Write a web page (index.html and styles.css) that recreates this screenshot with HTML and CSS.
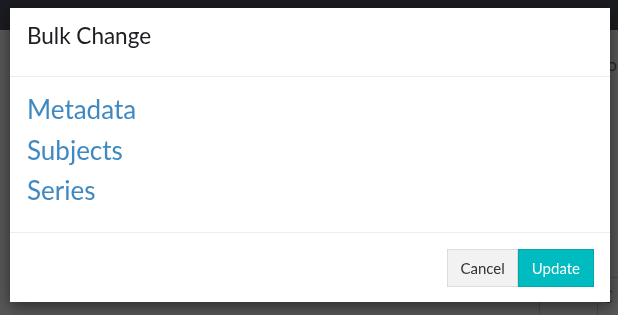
FILE: index.html
```html
<!DOCTYPE html>
<html>
<head>
<meta charset="utf-8">
<link rel="stylesheet" href="styles.css">
</head>
<body>
<div class="page">
  <div class="navbar"></div>
  <div class="content">
    <div class="row-info">Info</div>
    <div class="spacer"></div>
    <div class="bottom-box"><span class="cell"></span><span class="cell last">C</span></div>
  </div>
</div>
<div class="modal">
  <div class="modal-header"><h4 class="modal-title">Bulk Change</h4></div>
  <div class="modal-body">
    <a class="link" href="#">Metadata</a>
    <a class="link" href="#">Subjects</a>
    <a class="link" href="#">Series</a>
  </div>
  <div class="modal-footer">
    <button class="btn btn-default">Cancel</button><button class="btn btn-primary">Update</button>
  </div>
</div>
</body>
</html>
```
FILE: styles.css
```css
html, body {
  margin: 0;
  padding: 0;
  height: 100%;
  overflow: hidden;
}
body {
  background: #585858;
  font-family: Lato, "Liberation Sans", sans-serif;
}
.page {
  display: flex;
  flex-direction: column;
  height: 100%;
}
.navbar {
  height: 30px;
  background: #1b1c21;
  flex: none;
}
.content {
  flex: 1;
  display: flex;
  flex-direction: column;
  color: #1e2a36;
}
.row-info {
  margin-top: 25px;
  text-align: right;
  padding-right: 1px;
  font-size: 17px;
  line-height: 20px;
}
.spacer { flex: 1; }
.bottom-box {
  display: flex;
  justify-content: flex-end;
  height: 38px;
}
.cell {
  width: 57px;
  border-left: 1px solid #4a4a4a;
  border-top: 1px solid #4a4a4a;
}
.cell.last {
  width: 17px;
  padding-left: 3px;
  padding-top: 9px;
  font-size: 17px;
  line-height: 20px;
  overflow: hidden;
}
.modal {
  position: fixed;
  top: 8px;
  left: 10px;
  width: 600px;
  height: 294px;
  background: #fff;
  box-shadow: 0 5px 15px rgba(0,0,0,0.5);
  display: flex;
  flex-direction: column;
}
.modal-header {
  padding: 15px 17px 27px;
  border-bottom: 1px solid #ededed;
}
.modal-title {
  margin: 0;
  font-size: 22.5px;
  line-height: 26px;
  font-weight: normal;
  color: #1e1e22;
}
.modal-body {
  flex: 1;
  display: flex;
  flex-direction: column;
  align-items: flex-start;
  padding: 12px 17px 0;
}
.link {
  font-size: 26px;
  line-height: 40.5px;
  color: #3f89c3;
  text-decoration: none;
}
.modal-footer {
  border-top: 1px solid #ededed;
  padding: 16px 16px 15px;
  display: flex;
  justify-content: flex-end;
}
.btn {
  font-family: Lato, "Liberation Sans", sans-serif;
  font-size: 15px;
  height: 38px;
  padding: 0 12px;
  margin: 0;
  border: 1px solid #dcdcdc;
  border-radius: 0;
}
.btn-default {
  background: #f2f2f2;
  color: #333;
}
.btn-primary {
  background: #00bcc0;
  border-color: #00a8ac;
  color: #fff;
  padding: 0 13px;
}
```
